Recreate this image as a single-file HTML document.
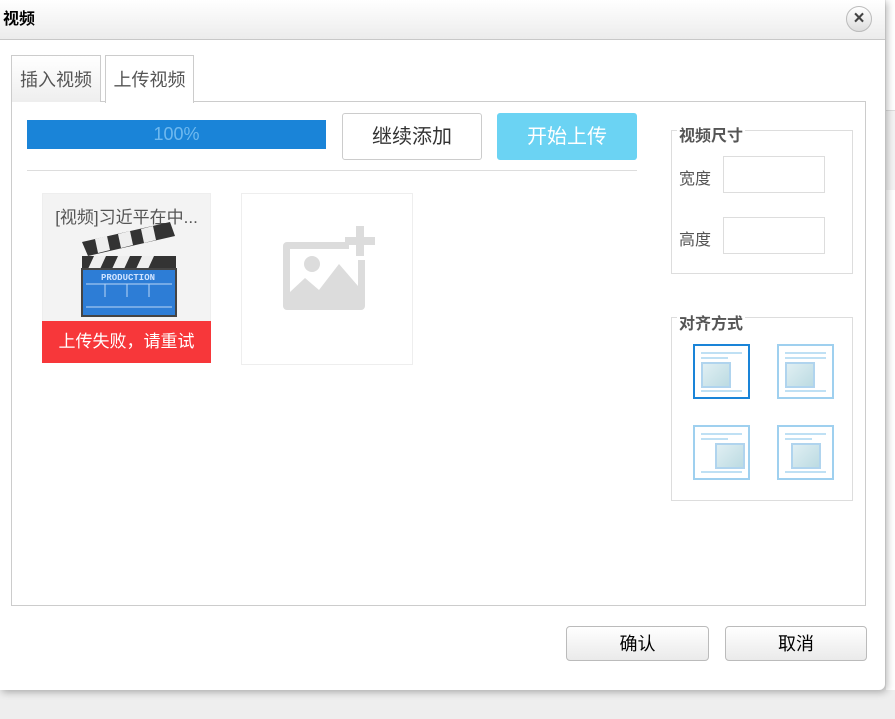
<!DOCTYPE html>
<html><head><meta charset="utf-8"><style>
*{box-sizing:border-box;margin:0;padding:0}
body{width:895px;height:719px;background:#eeeeee;position:relative;overflow:hidden;font-family:"Liberation Sans","Noto Sans CJK SC",sans-serif;}
.a{position:absolute}
#dlg{left:0;top:0;width:885px;height:690px;background:#fff;box-shadow:2px 2px 8px rgba(0,0,0,.3);border-radius:0 0 6px 0}
#title{left:0;top:0;width:885px;height:40px;background:linear-gradient(#fff,#ececec);border-bottom:1px solid #c8c8c8;font-weight:bold;font-size:16px;line-height:40px;padding-left:3px;color:#000}
#close{left:846px;top:6px;width:26px;height:26px;border-radius:50%;border:1px solid #bbb;background:linear-gradient(#fff,#ddd);text-align:center;line-height:23px;font-weight:bold;font-size:19px;color:#444}
.tab{top:55px;height:47px;border:1px solid #ccc;border-bottom:none;font-size:18px;color:#555;line-height:48px;text-align:center}
#panel{left:11px;top:101px;width:855px;height:505px;border:1px solid #ccc}
.btn{border:1px solid #ccc;border-radius:3px;text-align:center;font-size:20px;line-height:47px}
.fs{border:1px solid #ddd}
.lg{background:#fff;font-weight:bold;color:#555;font-size:16px;padding:0 2px}
.inp{border:1px solid #ddd;width:102px;height:37px}
.lab{font-size:16px;color:#555}
.ic{width:57px;height:55px;border:2px solid #9fd0ef;background:#fff}
.ic i{position:absolute;left:10px;top:16px;width:30px;height:26px;border:2px solid #b0d4ee;background:linear-gradient(135deg,#e0eff3,#bcdbe2)}
.ic b{position:absolute;left:6px;right:6px;height:2px;background:#bfe0f4}
.ob{border:1px solid #bbb;border-radius:4px;background:linear-gradient(#fff,#eaeaea);text-align:center;font-size:18px;line-height:34px;color:#000}
</style></head><body>
<div class="a" style="left:886px;top:0;width:9px;height:690px;background:#fff"></div>
<div class="a" style="left:886px;top:110px;width:9px;height:80px;background:#f4f4f4;border-top:1px solid #ddd"></div>
<div class="a" id="dlg"></div>
<div class="a" id="title">视频</div>
<div class="a" id="close">×</div>
<div class="a" id="panel"></div>
<div class="a tab" style="left:11px;width:90px;background:linear-gradient(#fff,#eee);">插入视频</div>
<div class="a tab" style="left:105px;width:89px;background:#fff;height:48px;">上传视频</div>
<div class="a" style="left:27px;top:120px;width:299px;height:29px;background:#1a84d8;color:#6fb9ef;font-size:18px;text-align:center;line-height:29px">100%</div>
<div class="a btn" style="left:342px;top:113px;width:140px;height:47px;color:#333;background:#fff">继续添加</div>
<div class="a btn" style="left:497px;top:113px;width:140px;height:47px;background:#6bd3f3;border-color:#6bd3f3;color:#fff">开始上传</div>
<div class="a" style="left:27px;top:170px;width:610px;height:1px;background:#ddd"></div>
<div class="a" style="left:42px;top:193px;width:169px;height:170px;background:#f3f3f3;border:1px solid #eee"></div>
<div class="a" style="left:42px;top:203px;width:169px;text-align:center;font-size:17px;color:#555">[视频]习近平在中...</div>
<svg class="a" style="left:80px;top:222px" width="97" height="95" viewBox="0 0 97 95">
<polygon points="2,20 90,0 95,14 8,34" fill="#333"/>
<polygon points="15,17 27,14 30,28 18,31" fill="#eee"/>
<polygon points="38,12 50,9 53,23 41,26" fill="#eee"/>
<polygon points="61,7 73,4 76,18 64,21" fill="#eee"/>
<rect x="2" y="34" width="94" height="13" fill="#333"/>
<polygon points="14,34 26,34 20,47 8,47" fill="#eee"/><polygon points="38,34 50,34 44,47 32,47" fill="#eee"/><polygon points="62,34 74,34 68,47 56,47" fill="#eee"/>
<rect x="2" y="47" width="94" height="47" fill="#2d7dd6" stroke="#444" stroke-width="2"/>
<text x="48" y="58" font-size="9" fill="#cfe3ff" text-anchor="middle" font-weight="bold" font-family="Liberation Mono">PRODUCTION</text>
<line x1="6" y1="62" x2="92" y2="62" stroke="#bcd6f5"/><line x1="6" y1="85" x2="92" y2="85" stroke="#bcd6f5"/>
<line x1="25" y1="62" x2="25" y2="75" stroke="#bcd6f5"/><line x1="47" y1="62" x2="47" y2="75" stroke="#bcd6f5"/><line x1="69" y1="62" x2="69" y2="75" stroke="#bcd6f5"/>
</svg>
<div class="a" style="left:42px;top:321px;width:169px;height:42px;background:#f7373a;color:#fff;font-size:17px;text-align:center;line-height:42px">上传失败，请重试</div>
<div class="a" style="left:241px;top:193px;width:172px;height:172px;border:1px solid #eee"></div>
<svg class="a" style="left:283px;top:226px" width="96" height="86" viewBox="0 0 96 86">
<path d="M66 16 H4 a4 4 0 0 0 -4 4 V80 a4 4 0 0 0 4 4 H78 a4 4 0 0 0 4 -4 V34 h-7 V60 L56 38 L36 64 L22 52 L7 66 V23 H66Z" fill="#dcdcdc"/>
<circle cx="29" cy="38" r="8" fill="#dcdcdc"/>
<rect x="73" y="0" width="8" height="30" fill="#dcdcdc"/><rect x="62" y="11" width="30" height="8" fill="#dcdcdc"/>
</svg>
<div class="a fs" style="left:671px;top:130px;width:182px;height:144px"></div>
<div class="a lg" style="left:677px;top:122px">视频尺寸</div>
<div class="a lab" style="left:679px;top:165px">宽度</div><div class="a inp" style="left:723px;top:156px"></div>
<div class="a lab" style="left:679px;top:226px">高度</div><div class="a inp" style="left:723px;top:217px"></div>
<div class="a fs" style="left:671px;top:317px;width:182px;height:184px"></div>
<div class="a lg" style="left:677px;top:310px">对齐方式</div>
<div class="a ic" style="left:693px;top:344px;border-color:#1a84d8"><b style="top:6px"></b><b style="top:11px;right:20px"></b><i style="left:6px"></i><b style="top:44px"></b></div>
<div class="a ic" style="left:777px;top:344px"><b style="top:6px"></b><b style="top:11px"></b><i style="left:6px"></i><b style="top:44px"></b></div>
<div class="a ic" style="left:693px;top:425px"><b style="top:6px"></b><b style="top:11px;right:20px"></b><i style="left:20px"></i><b style="top:44px"></b></div>
<div class="a ic" style="left:777px;top:425px"><b style="top:6px"></b><b style="top:11px;right:20px"></b><i style="left:12px"></i><b style="top:44px"></b></div>
<div class="a ob" style="left:566px;top:626px;width:143px;height:35px">确认</div>
<div class="a ob" style="left:725px;top:626px;width:142px;height:35px">取消</div>
</body></html>
